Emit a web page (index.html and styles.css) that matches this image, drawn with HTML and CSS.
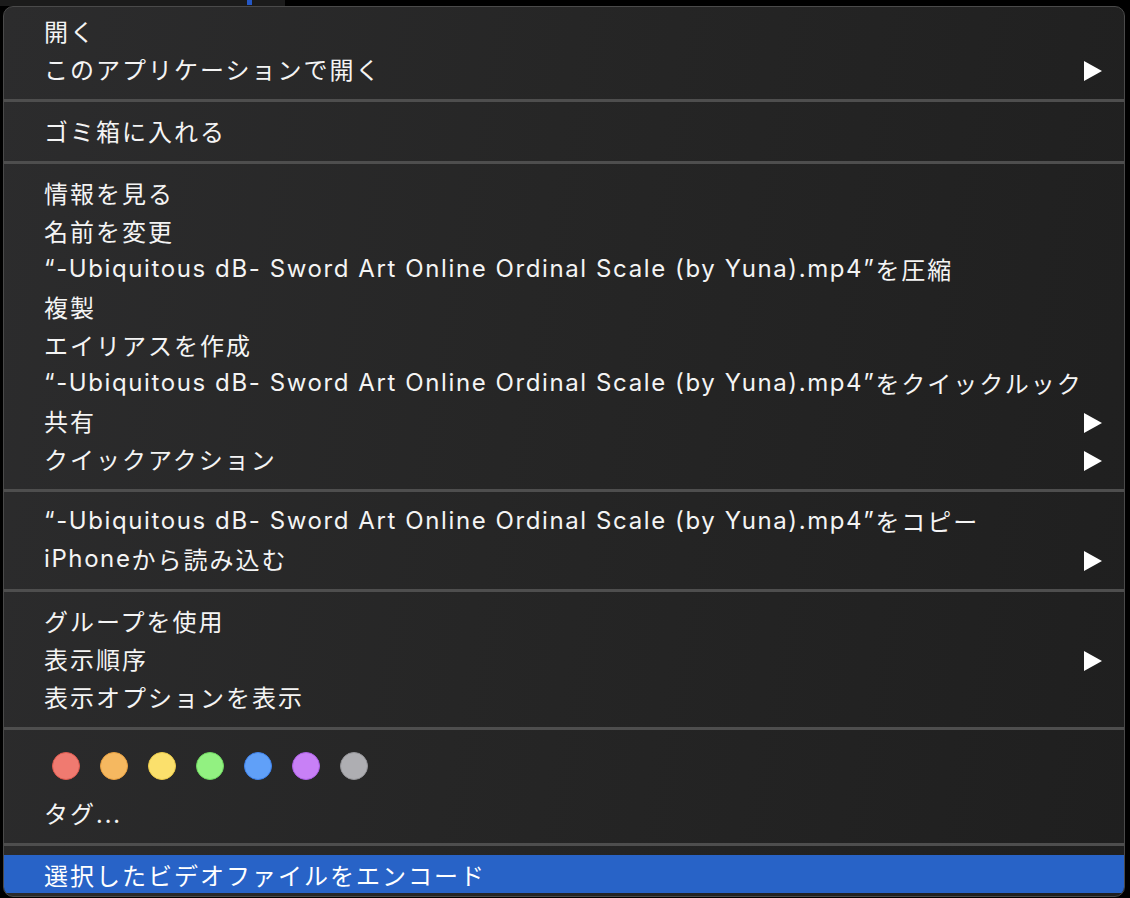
FILE: index.html
```html
<!DOCTYPE html>
<html lang="ja">
<head>
    <meta charset="UTF-8">
    <title>コンテキストメニュー</title>
    <link rel="stylesheet" href="styles.css">
</head>
<body>
    <div class="backdrop">
        <div class="backdrop-bar">
            <span class="backdrop-mark"></span>
        </div>
    </div>
    <div class="menu">
        <div class="item">開く</div>
        <div class="item has-sub">このアプリケーションで開く<span class="arrow"></span></div>
        <div class="sep"></div>
        <div class="item">ゴミ箱に入れる</div>
        <div class="sep"></div>
        <div class="item">情報を見る</div>
        <div class="item">名前を変更</div>
        <div class="item"><span class="latin">“-Ubiquitous dB- Sword Art Online Ordinal Scale (by Yuna).mp4”</span>を圧縮</div>
        <div class="item">複製</div>
        <div class="item">エイリアスを作成</div>
        <div class="item"><span class="latin">“-Ubiquitous dB- Sword Art Online Ordinal Scale (by Yuna).mp4”</span>をクイックルック</div>
        <div class="item has-sub">共有<span class="arrow"></span></div>
        <div class="item has-sub">クイックアクション<span class="arrow"></span></div>
        <div class="sep"></div>
        <div class="item"><span class="latin">“-Ubiquitous dB- Sword Art Online Ordinal Scale (by Yuna).mp4”</span>をコピー</div>
        <div class="item has-sub"><span class="latin">iPhone</span>から読み込む<span class="arrow"></span></div>
        <div class="sep"></div>
        <div class="item">グループを使用</div>
        <div class="item has-sub">表示順序<span class="arrow"></span></div>
        <div class="item">表示オプションを表示</div>
        <div class="sep"></div>
        <div class="tags">
            <span class="dot red"></span>
            <span class="dot orange"></span>
            <span class="dot yellow"></span>
            <span class="dot green"></span>
            <span class="dot blue"></span>
            <span class="dot purple"></span>
            <span class="dot gray"></span>
        </div>
        <div class="item">タグ...</div>
        <div class="sep"></div>
        <div class="item selected">選択したビデオファイルをエンコード</div>
    </div>
</body>
</html>
```

FILE: styles.css
```css
* {
    box-sizing: border-box;
}

body {
    margin: 0;
    background-color: #000;
    font-family: "Noto Sans CJK JP", sans-serif;
    overflow: hidden;
    height: 898px;
}

.backdrop {
    height: 6px;
    display: flex;
}

.backdrop-bar {
    width: 285px;
    height: 6px;
    background-color: #1b1b1b;
    position: relative;
}

.backdrop-mark {
    position: absolute;
    left: 247px;
    top: 0;
    width: 5px;
    height: 5px;
    background-color: #2457c5;
}

.menu {
    margin-left: 3px;
    width: 1122px;
    height: 891px;
    padding-top: 4px;
    border: 1px solid #4a4a4a;
    border-radius: 10px;
    background: linear-gradient(100deg, #2c2c2d 0%, #262626 45%, #1f1f1f 100%);
    color: #f4f4f4;
    overflow: hidden;
}

.item {
    display: flex;
    align-items: center;
    height: 38px;
    padding-left: 40px;
    padding-right: 22px;
    font-size: 24px;
    letter-spacing: 2px;
    white-space: nowrap;
}

.latin {
    font-family: Inter, sans-serif;
    letter-spacing: 1.6px;
}

.has-sub .arrow {
    margin-left: auto;
    margin-top: 6px;
    width: 0;
    height: 0;
    border-top: 10px solid transparent;
    border-bottom: 10px solid transparent;
    border-left: 18px solid #fff;
}

.sep {
    height: 24px;
    padding-top: 12px;
}

.sep::before {
    content: "";
    display: block;
    width: 100%;
    height: 3px;
    background-color: #4e4e4e;
}

.tags {
    height: 54px;
    display: flex;
    align-items: center;
    gap: 20px;
    padding-left: 48px;
}

.dot {
    width: 28px;
    height: 28px;
    border-radius: 50%;
    border: 1px solid;
}

.red { background-color: #f07a70; border-color: #dd5a4f; }
.orange { background-color: #f5b860; border-color: #e8a040; }
.yellow { background-color: #fbe06c; border-color: #eccb4a; }
.green { background-color: #92f181; border-color: #6fd960; }
.blue { background-color: #60a0f8; border-color: #3f84ef; }
.purple { background-color: #c880f6; border-color: #ad5fe6; }
.gray { background-color: #aeaeb2; border-color: #949498; }

.selected {
    background-color: #2863c7;
    color: #fff;
}
```
